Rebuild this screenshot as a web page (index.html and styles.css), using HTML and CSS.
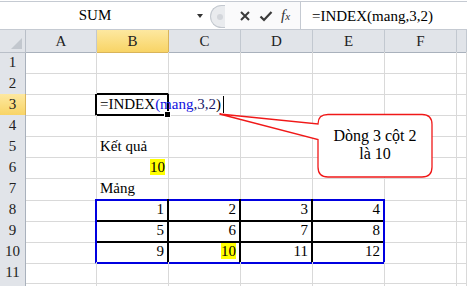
FILE: index.html
```html
<html>

<head>
    <title>INDEX</title>
    <link rel="stylesheet" href="styles.css">
</head>

<body>
    <div class="fbar">
        <div class="namebox">
            <span class="name">SUM</span>
            <span class="drop"></span>
        </div>
        <div class="grip"><span class="dot"></span></div>
        <div class="btns">
            <svg width="12" height="12" viewBox="0 0 12 12"><path d="M2 2 L10 10 M10 2 L2 10" stroke="#3a3a3a" stroke-width="2" /></svg>
            <svg width="14" height="12" viewBox="0 0 14 12"><path d="M1.5 6.5 L5 10 L12.5 2" stroke="#3a3a3a" stroke-width="2.2" fill="none" /></svg>
            <span class="fx">f<small>x</small></span>
        </div>
        <div class="formula">=INDEX(mang,3,2)</div>
    </div>

    <div class="sheet">
        <div class="row hdr">
            <div class="corner"><span class="tri"></span></div>
            <div class="ch">A</div>
            <div class="ch sel">B</div>
            <div class="ch">C</div>
            <div class="ch">D</div>
            <div class="ch">E</div>
            <div class="ch">F</div>
            <div class="ch"></div>
        </div>
        <div class="row">
            <div class="rh">1</div>
            <div class="c"></div><div class="c"></div><div class="c"></div><div class="c"></div><div class="c"></div><div class="c"></div><div class="c"></div>
        </div>
        <div class="row">
            <div class="rh">2</div>
            <div class="c"></div><div class="c bb"></div><div class="c"></div><div class="c"></div><div class="c"></div><div class="c"></div><div class="c"></div>
        </div>
        <div class="row">
            <div class="rh sel">3</div>
            <div class="c br"></div>
            <div class="c active">
                <span class="edit">=INDEX<span class="ref">(mang</span><span class="arg">,3,2</span>)<span class="caret"></span></span>
                <span class="handle"></span>
            </div>
            <div class="c"></div><div class="c"></div><div class="c"></div><div class="c"></div><div class="c"></div>
        </div>
        <div class="row">
            <div class="rh">4</div>
            <div class="c"></div><div class="c"></div><div class="c"></div><div class="c"></div><div class="c"></div><div class="c"></div><div class="c"></div>
        </div>
        <div class="row">
            <div class="rh">5</div>
            <div class="c"></div><div class="c txt">Kết quả</div><div class="c"></div><div class="c"></div><div class="c"></div><div class="c"></div><div class="c"></div>
        </div>
        <div class="row">
            <div class="rh">6</div>
            <div class="c"></div><div class="c num"><span class="hl">10</span></div><div class="c"></div><div class="c"></div><div class="c"></div><div class="c"></div><div class="c"></div>
        </div>
        <div class="row">
            <div class="rh">7</div>
            <div class="c"></div><div class="c txt top-b">Mảng</div><div class="c top-b"></div><div class="c top-b"></div><div class="c top-b"></div><div class="c"></div><div class="c"></div>
        </div>
        <div class="row">
            <div class="rh">8</div>
            <div class="c left-b"></div>
            <div class="c num t">1</div><div class="c num t">2</div><div class="c num t">3</div><div class="c num t end">4</div>
            <div class="c"></div><div class="c"></div>
        </div>
        <div class="row">
            <div class="rh">9</div>
            <div class="c left-b"></div>
            <div class="c num t">5</div><div class="c num t">6</div><div class="c num t">7</div><div class="c num t end">8</div>
            <div class="c"></div><div class="c"></div>
        </div>
        <div class="row">
            <div class="rh">10</div>
            <div class="c left-b"></div>
            <div class="c num t last">9</div><div class="c num t last"><span class="hl">10</span></div><div class="c num t last">11</div><div class="c num t last end">12</div>
            <div class="c"></div><div class="c"></div>
        </div>
        <div class="row">
            <div class="rh">11</div>
            <div class="c"></div><div class="c"></div><div class="c"></div><div class="c"></div><div class="c"></div><div class="c"></div><div class="c"></div>
        </div>
        <div class="row">
            <div class="rh"></div>
            <div class="c"></div><div class="c"></div><div class="c"></div><div class="c"></div><div class="c"></div><div class="c"></div><div class="c"></div>
        </div>

        <!-- callout shape sits over the cells -->
        <div class="callout">
            <svg width="220" height="70" viewBox="0 0 220 70">
                <path d="M110 1.5 H204 Q214 1.5 214 11.5 V54 Q214 64 204 64 H110 Q100 64 100 54 V26.5 L1.5 1 L100 11 Q100 1.5 110 1.5 Z"
                    fill="#fff" stroke="#f01818" stroke-width="1.3" />
            </svg>
            <div class="note">Dòng 3 cột 2<br>là 10</div>
        </div>
    </div>
</body>

</html>
```

FILE: styles.css
```css
body {
    margin: 0;
    background: #fff;
    font-family: "Liberation Serif", serif;
    font-size: 15px;
    color: #000;
    overflow: hidden;
}

/* formula bar */
.fbar {
    display: flex;
    margin-top: 1px;
    height: 27px;
    border-top: 1px solid #c5cad2;
    border-bottom: 1px solid #c5cad2;
    background: #fff;
}

.namebox {
    width: 210px;
    display: flex;
    align-items: center;
}

.name {
    width: 190px;
    text-align: center;
}

.drop {
    width: 0;
    height: 0;
    margin-left: 7px;
    border-left: 3.5px solid transparent;
    border-right: 3.5px solid transparent;
    border-top: 4px solid #333;
}

.grip {
    width: 14px;
    height: 21px;
    margin-top: 3px;
    border: 1px solid #c3c8cf;
    border-right: none;
    border-radius: 12px 0 0 12px;
    background: #e9ebee;
    display: flex;
    align-items: center;
    justify-content: center;
}

.dot {
    width: 6px;
    height: 6px;
    border-radius: 3px;
    background: #d3d6db;
    margin-left: 3px;
}

.btns {
    box-sizing: border-box;
    width: 76px;
    display: flex;
    align-items: center;
    gap: 8px;
    padding-left: 14px;
    border-right: 1px solid #c5cad2;
    background: #fafafb;
}

.fx {
    font-style: italic;
    font-size: 15px;
    color: #333;
}

.fx small {
    font-size: 11px;
}

.formula {
    padding-left: 11px;
    padding-top: 4px;
    line-height: 20px;
}

/* sheet grid */
.sheet {
    position: relative;
}

.row {
    display: grid;
    grid-template-columns: 26px 71px 72px 72px 72px 72px 72px 1fr;
    height: 21px;
}

.row.hdr {
    height: 22px;
}

.row > div {
    box-sizing: border-box;
}

.corner {
    background: #e1e4e9;
    border-right: 1px solid #b9bfc8;
    border-bottom: 1px solid #b9bfc8;
    position: relative;
}

.tri {
    position: absolute;
    right: 3px;
    bottom: 3px;
    width: 0;
    height: 0;
    border-left: 11px solid transparent;
    border-bottom: 11px solid #c2c7ce;
}

.ch {
    background: #e1e4e9;
    border-right: 1px solid #c2c8d0;
    border-bottom: 1px solid #a9b1bc;
    text-align: center;
    line-height: 22px;
    color: #222;
}

.ch.sel,
.rh.sel {
    background: linear-gradient(#fde8a0, #f8d466);
    border-right-color: #d9b45a;
    border-bottom-color: #d9b45a;
}

.rh {
    background: #e1e4e9;
    border-right: 1px solid #a9b1bc;
    border-bottom: 1px solid #c2c8d0;
    text-align: center;
    line-height: 21px;
    color: #222;
}

.c {
    border-right: 1px solid #d9d9d9;
    border-bottom: 1px solid #d9d9d9;
    line-height: 21px;
    white-space: nowrap;
    position: relative;
}

.txt {
    padding-left: 3px;
}

.num {
    text-align: right;
    padding-right: 3px;
}

.hl {
    background: #ffff00;
}

/* active cell B3 */
.bb {
    border-bottom: 2px solid #000;
}

.br {
    border-right: 2px solid #000;
}

.active {
    border-right: 2px solid #000;
    border-bottom: 2px solid #000;
    z-index: 2;
}

.edit {
    position: absolute;
    left: 3px;
    top: 0;
    line-height: 21px;
}

.ref {
    color: #1010e0;
}

.arg {
    color: #1c1c6a;
}

.caret {
    display: inline-block;
    width: 1px;
    height: 17px;
    background: #000;
    margin-left: 2px;
    vertical-align: -4px;
}

.handle {
    position: absolute;
    right: -4px;
    bottom: -4px;
    width: 5px;
    height: 5px;
    background: #000;
    border: 1px solid #fff;
}

/* table Mang */
.top-b {
    border-bottom: 2px solid #0000e0;
}

.left-b {
    border-right: 2px solid #0000e0;
}

.t {
    border-right: 2px solid #000;
    border-bottom: 2px solid #000;
}

.t.end {
    border-right-color: #0000e0;
}

.t.last {
    border-bottom-color: #0000e0;
}

/* callout */
.callout {
    position: absolute;
    left: 218px;
    top: 83px;
    width: 220px;
    height: 70px;
    z-index: 3;
}

.callout svg {
    position: absolute;
    left: 0;
    top: 0;
}

.note {
    position: absolute;
    left: 100px;
    top: 14px;
    width: 114px;
    text-align: center;
    line-height: 18px;
    font-size: 16px;
}
```
